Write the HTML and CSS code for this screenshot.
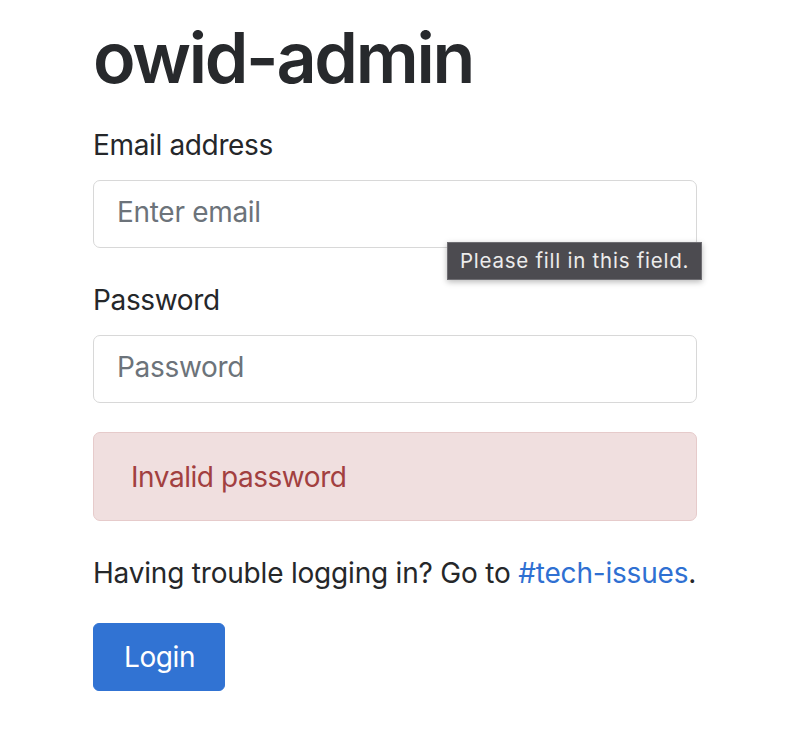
FILE: index.html
```html
<!DOCTYPE html>
<html lang="en">
<head>
<meta charset="utf-8">
<title>owid-admin</title>
<link rel="stylesheet" href="styles.css">
</head>
<body>
<main class="page">
  <h1 class="title">owid-admin</h1>
  <form class="login-form">
    <div class="form-group">
      <label class="form-label" for="email">Email address</label>
      <div class="field-wrap">
        <input class="form-control" id="email" type="email" placeholder="Enter email">
        <div class="validation-tip">Please fill in this field.</div>
      </div>
    </div>
    <div class="form-group">
      <label class="form-label" for="password">Password</label>
      <input class="form-control" id="password" type="password" placeholder="Password">
    </div>
    <div class="alert-danger">Invalid password</div>
    <p class="help-text">Having trouble logging in? Go to <a class="help-link" href="#">#tech-issues</a>.</p>
    <button class="btn-login" type="button">Login</button>
  </form>
</main>
</body>
</html>
```

FILE: styles.css
```css
html, body {
  margin: 0;
  padding: 0;
  background: #ffffff;
}

body {
  font-family: Inter, "Noto Sans", "Liberation Sans", sans-serif;
  font-size: 28px;
  line-height: 42px;
  letter-spacing: -0.35px;
  color: #25272a;
}

.page {
  width: 604px;
  margin-left: 93px;
  padding-top: 16px;
}

.title {
  margin: 0 0 24px 0;
  font-size: 70px;
  line-height: 84px;
  font-weight: 600;
  letter-spacing: -2.3px;
  color: #27292c;
}

.login-form {
  display: flex;
  flex-direction: column;
  align-items: flex-start;
}

.form-group {
  width: 100%;
  margin-bottom: 31px;
}

.form-group + .form-group {
  margin-bottom: 29px;
}

.form-label {
  display: block;
  margin-bottom: 14px;
  line-height: 42px;
}

.field-wrap {
  position: relative;
}

.form-control {
  display: block;
  box-sizing: border-box;
  width: 100%;
  height: 68px;
  margin: 0;
  padding: 10px 22px 14px 23px;
  font-family: inherit;
  font-size: 28px;
  line-height: 42px;
  letter-spacing: -0.3px;
  color: #25272a;
  background: #ffffff;
  border: 1px solid #d8d8d8;
  border-radius: 7px;
  outline: none;
}

.form-control::placeholder {
  color: #6c737a;
  opacity: 1;
}

.validation-tip {
  position: absolute;
  left: 354px;
  top: 62px;
  box-sizing: border-box;
  height: 38px;
  padding: 0 12px 0 12px;
  font-size: 20.5px;
  line-height: 36px;
  letter-spacing: 0.75px;
  color: #ececec;
  white-space: nowrap;
  background: #4c4b50;
  border: 1px solid #6e6d72;
  box-shadow: 0 2px 6px rgba(0, 0, 0, 0.28);
}

.alert-danger {
  box-sizing: border-box;
  width: 100%;
  padding: 23px 36px 22px 37px;
  line-height: 42px;
  letter-spacing: -0.45px;
  color: #a2403f;
  background: #f0dfdf;
  border: 1px solid #e6cbcb;
  border-radius: 7px;
}

.help-text {
  margin: 31px 0 29px 0;
  line-height: 42px;
  letter-spacing: -0.2px;
  white-space: nowrap;
}

.help-link {
  color: #2f70d2;
  text-decoration: none;
}

.btn-login {
  box-sizing: border-box;
  height: 68px;
  padding: 12px 29px 12px 30px;
  font-family: inherit;
  font-size: 28px;
  line-height: 42px;
  letter-spacing: -0.4px;
  color: #ffffff;
  background: #3173d3;
  border: 1px solid #3173d3;
  border-radius: 6px;
  cursor: pointer;
}
```
